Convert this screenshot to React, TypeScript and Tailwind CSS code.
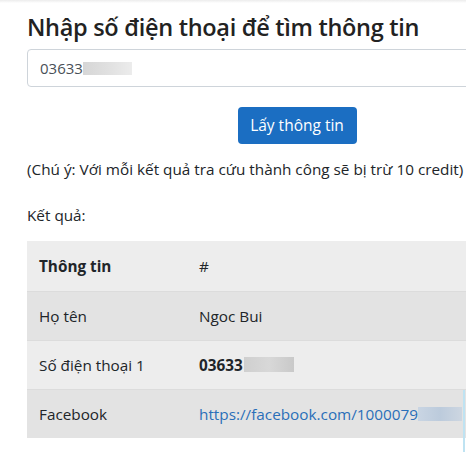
export default function App() {
  const rows = [
    { label: "Họ tên", bg: "bg-[#e3e3e3]", value: <span>Ngoc Bui</span> },
    {
      label: "Số điện thoại 1",
      bg: "bg-[#ededed]",
      value: (
        <span className="flex items-center font-bold">
          03633
          <span className="ml-[1px] inline-block h-[15px] w-[50px] bg-gradient-to-r from-[#cfcfcf] via-[#d8d8d8] to-[#c9c9c9]" />
        </span>
      ),
    },
    {
      label: "Facebook",
      bg: "bg-[#e3e3e3]",
      value: (
        <span className="flex items-center text-[#2a6fb9]">
          https://facebook.com/1000079
          <span className="inline-block h-[14px] w-[44px] bg-gradient-to-r from-[#c9d5e3] via-[#bccbdc] to-[#cdd6e1]" />
        </span>
      ),
    },
  ];

  return (
    <div
      className="relative h-[452px] w-[466px] overflow-hidden bg-white text-[#212529]"
      style={{ fontFamily: '"Open Sans", "Noto Sans", sans-serif' }}
    >
      <div className="h-[3px] bg-gradient-to-b from-[#ececec] to-white" />
      <div className="ml-[27px] w-[540px] pt-[10px]">
        <h4 className="text-[23.5px] font-semibold leading-[29px] tracking-[-0.3px] text-[#222]">
          Nhập số điện thoại để tìm thông tin
        </h4>

        {/* ô nhập số */}
        <div className="mt-[7px] flex h-[38px] items-center rounded-[4px] border border-[#ced4da] px-[12px] text-[15px] text-[#495057]">
          03633
          <span className="inline-block h-[13px] w-[49px] bg-gradient-to-r from-[#d6d6d6] via-[#e0e0e0] to-[#ececec]" />
        </div>

        <div className="mt-[20px] flex justify-center">
          <button className="h-[37px] w-[119px] rounded-[4px] bg-[#1b6ec2] text-[15.5px] text-white">
            Lấy thông tin
          </button>
        </div>

        <p className="mt-[13px] text-[15.3px] leading-[24px]">
          (Chú ý: Với mỗi kết quả tra cứu thành công sẽ bị trừ 10 credit)
        </p>
        <p className="mt-[22px] text-[15.3px] leading-[24px]">Kết quả:</p>

        {/* bảng kết quả */}
        <table className="mt-[14px] w-full border-collapse text-[15.3px] leading-[24px]">
          <thead>
            <tr className="bg-[#ededed]">
              <th className="h-[50px] w-[160px] px-[12px] text-left font-bold">Thông tin</th>
              <th className="h-[50px] px-[12px] text-left font-normal">#</th>
            </tr>
          </thead>
          <tbody>
            {rows.map((r) => (
              <tr key={r.label} className={`${r.bg} border-t border-[#dcdcdc]`}>
                <td className="px-[12px] py-[12px]">{r.label}</td>
                <td className="px-[12px] py-[12px]">{r.value}</td>
              </tr>
            ))}
          </tbody>
        </table>
      </div>
      <div className="absolute left-[463px] top-[390px] h-[62px] w-[2px] bg-[#bfe3f2]" />
    </div>
  );
}
